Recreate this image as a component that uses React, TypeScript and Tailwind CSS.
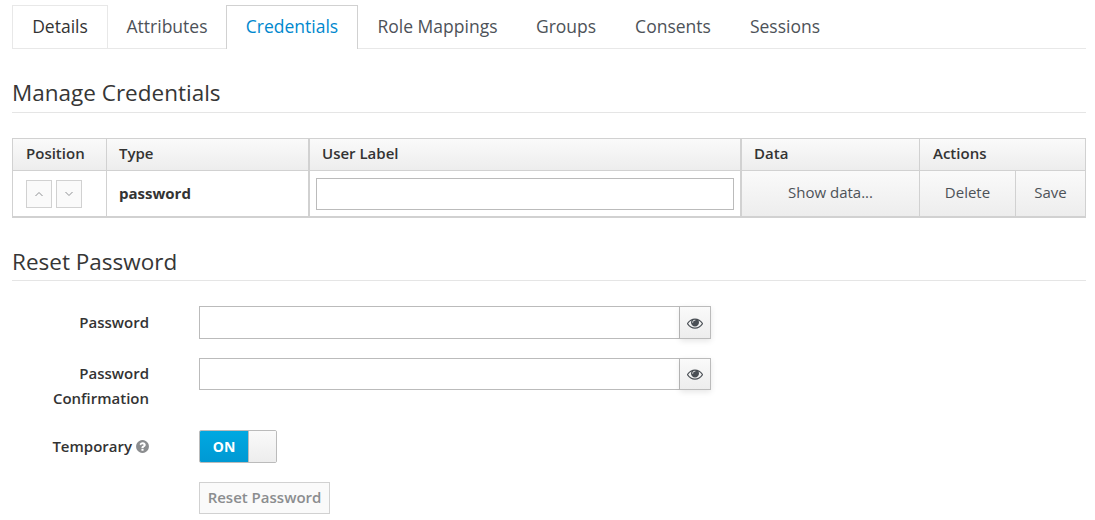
import React from "react";

const tabs = [
  { label: "Details", w: "w-[96px]" },
  { label: "Attributes", w: "w-[118px]" },
  { label: "Credentials", w: "w-[132px]" },
  { label: "Role Mappings", w: "w-[159px]" },
  { label: "Groups", w: "w-[98px]" },
  { label: "Consents", w: "w-[116px]" },
  { label: "Sessions", w: "w-[108px]" },
];

function Eye() {
  return (
    <svg width="16" height="16" viewBox="0 0 1792 1792" fill="#4a4f55" aria-hidden="true">
      <path d="M1664 960q-152-236-381-353 61 104 61 225 0 185-131.500 316.500t-316.500 131.500-316.500-131.500-131.500-316.500q0-121 61-225-229 117-381 353 133 205 333.500 326.500t434.500 121.500 434.500-121.500 333.500-326.500zm-720-384q0-20-14-34t-34-14q-125 0-214.500 89.500t-89.500 214.500q0 20 14 34t34 14 34-14 14-34q0-86 61-147t147-61q20 0 34-14t14-34zm848 384q0 34-20 69-140 230-376.500 368.500t-499.500 138.500-499.500-139-376.500-368q-20-35-20-69t20-69q140-229 376.500-368t499.500-139 499.500 139 376.500 368q20 35 20 69z" />
    </svg>
  );
}

function PasswordField({ h }: { h: string }) {
  return (
    <div className={"flex w-[512px] " + h}>
      <div className="flex-1 bg-white border border-[#bbbbbb]" />
      <div className="w-[31px] border border-l-0 border-[#bbbbbb] bg-gradient-to-b from-[#fafafa] to-[#ededed] flex items-center justify-center shadow-[0_2px_6px_rgba(3,3,3,0.1)]">
        <Eye />
      </div>
    </div>
  );
}

function SmallArrow({ d }: { d: string }) {
  return (
    <div className="w-[26px] h-[28px] border border-[#d1d1d1] bg-[#fafafa] flex items-center justify-center">
      <svg width="10" height="10" viewBox="0 0 10 10" fill="none" stroke="#8f9194" strokeWidth="1">
        <path d={d} />
      </svg>
    </div>
  );
}

const thClass = "h-[31px] flex items-center pb-[2px] text-[15px] font-semibold text-[#333333] border-r border-[#d1d1d1] bg-gradient-to-b from-[#fafafa] to-[#ededed]";
const btnCell = "flex items-center justify-center pb-[2px] text-[15px] text-[#4d5258] border-r border-[#d1d1d1] bg-gradient-to-b from-[#fafafa] to-[#ededed]";

export default function App() {
  return (
    <div className="w-[1095px] h-[520px] overflow-hidden bg-white pl-[12px] pr-[9px] pt-[5px] font-['Open_Sans',sans-serif] text-[#363636]">
      <div className="flex h-[44px] border-b border-[#e8e8e8]">
        {tabs.map((t, i) => {
          const active = i === 2;
          const first = i === 0;
          return (
            <div
              key={t.label}
              className={
                t.w +
                (active
                  ? " h-[44px] pb-[2px] flex items-center justify-center text-[17.5px] text-[#0088ce] bg-white border border-b-0 border-[#d1d1d1]"
                  : first
                  ? " h-[43px] pb-[1px] flex items-center justify-center text-[17.5px] text-[#333333] border-t border-l border-r border-[#e8e8e8]"
                  : " h-[43px] pb-[1px] flex items-center justify-center text-[17.5px] text-[#4d5258]")
              }
            >
              {t.label}
            </div>
          );
        })}
      </div>

      <h2 className="mt-[26px] h-[38px] text-[22.5px] leading-[35px] font-normal text-[#363636] border-b border-[#e5e5e5]">Manage Credentials</h2>

      <div className="mt-[25px] border border-[#d1d1d1] border-b-2">
        <div className="flex border-b border-[#d1d1d1]">
          <div className={thClass + " w-[94px] px-[13px]"}>Position</div>
          <div className={thClass + " w-[203px] px-[12px] border-r-2"}>Type</div>
          <div className={thClass + " w-[432px] px-[12px] border-r-2"}>User Label</div>
          <div className={thClass + " w-[178px] px-[12px]"}>Data</div>
          <div className={thClass + " flex-1 px-[13px] border-r-0"}>Actions</div>
        </div>
        <div className="flex h-[45px]">
          <div className="w-[94px] border-r border-[#d1d1d1] flex items-center gap-[4px] pl-[13px]">
            <SmallArrow d="M1.500 7 L5 3.500 L8.500 7" />
            <SmallArrow d="M1.500 3 L5 6.500 L8.500 3" />
          </div>
          <div className="w-[203px] border-r-2 border-[#d1d1d1] flex items-center px-[12px] pb-[1px] text-[15px] font-bold text-[#333333]">password</div>
          <div className="w-[432px] border-r-2 border-[#d1d1d1] flex items-center pl-[6px] pr-[6px]">
            <div className="w-full h-[32px] border border-[#bbbbbb] bg-white" />
          </div>
          <div className={btnCell + " w-[178px]"}>Show data...</div>
          <div className={btnCell + " w-[96px]"}>Delete</div>
          <div className={btnCell + " flex-1 border-r-0"}>Save</div>
        </div>
      </div>

      <h2 className="mt-[25px] h-[38px] text-[22.5px] leading-[37px] font-normal text-[#363636] border-b border-[#e5e5e5]">Reset Password</h2>

      <div className="mt-[25px] flex flex-col">
        <div className="flex items-center gap-[50px]">
          <label className="w-[137px] text-right text-[15px] font-semibold text-[#333333]">Password</label>
          <PasswordField h="h-[33px]" />
        </div>
        <div className="mt-[19px] flex items-start gap-[50px]">
          <label className="w-[137px] text-right text-[15px] leading-[25px] pt-[3px] font-semibold text-[#333333]">Password Confirmation</label>
          <PasswordField h="h-[32px]" />
        </div>
        <div className="mt-[19px] flex items-center gap-[50px]">
          <label className="w-[137px] flex items-center justify-end gap-[3px] text-[15px] font-semibold text-[#333333]">
            Temporary
            <svg className="-mr-[1px]" width="15" height="15" viewBox="0 0 1792 1792" fill="#8b8d8f" aria-hidden="true">
              <path d="M1024 1376v-192q0-14-9-23t-23-9h-192q-14 0-23 9t-9 23v192q0 14 9 23t23 9h192q14 0 23-9t9-23zm256-672q0-88-55.500-163t-138.500-116-170-41q-243 0-371 213-15 24 8 42l132 100q7 6 19 6 16 0 25-12 53-68 86-92 34-24 86-24 48 0 85.500 26t37.500 59q0 38-20 61t-68 45q-63 28-115.500 86.500t-52.500 125.500v36q0 14 9 23t23 9h192q14 0 23-9t9-23q0-19 21.500-49.500t54.500-49.500q32-18 49-28.500t46-35 44.500-48 28-60.500 12.500-81zm384 192q0 209-103 385.500t-279.500 279.500-385.500 103-385.500-103-279.500-279.500-103-385.500 103-385.500 279.500-279.500 385.500-103 385.500 103 279.500 279.500 103 385.500z" />
            </svg>
          </label>
          <div className="w-[78px] h-[33px] flex rounded-[2px] border border-[#bbbbbb] overflow-hidden">
            <div className="w-[49px] flex items-center justify-center pb-[1px] bg-gradient-to-b from-[#00a8e1] to-[#0099d3] text-white text-[14px] font-bold border-r border-[#bbbbbb]">ON</div>
            <div className="flex-1 bg-gradient-to-b from-[#fafafa] to-[#ededed]" />
          </div>
        </div>
        <div className="mt-[19px] ml-[187px]">
          <div className="w-[131px] h-[32px] flex items-center justify-center pb-[2px] border border-[#d1d1d1] bg-[#fafafa] text-[15px] font-semibold text-[#8b8d8f]">Reset Password</div>
        </div>
      </div>
    </div>
  );
}
